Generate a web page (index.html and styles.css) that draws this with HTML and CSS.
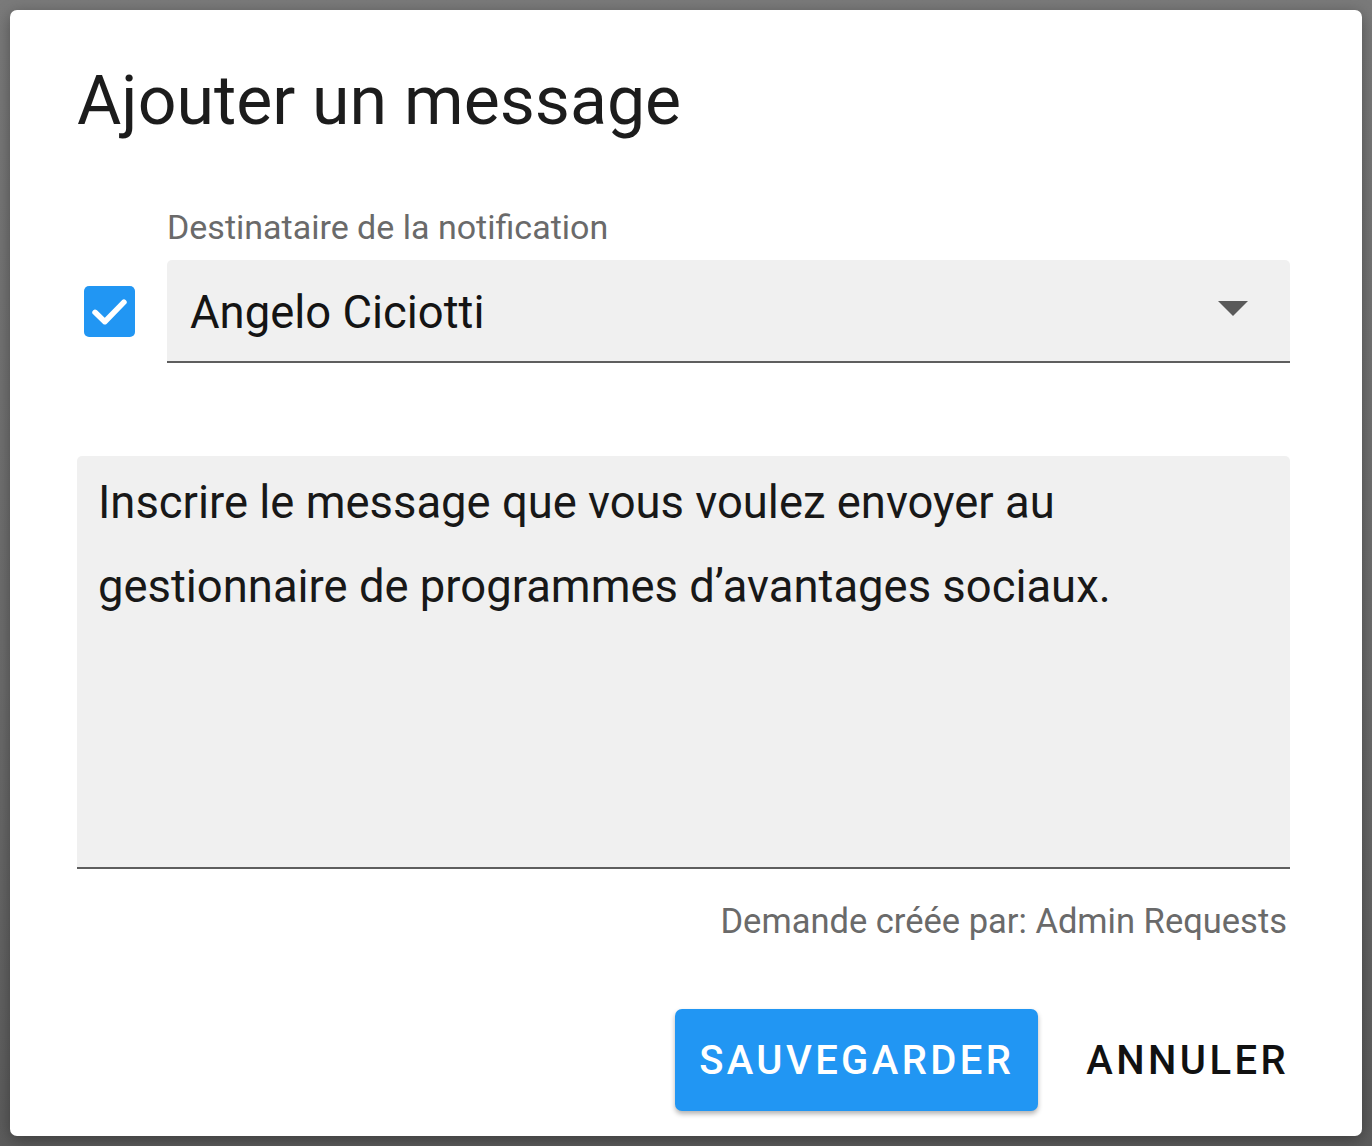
FILE: index.html
```html
<!DOCTYPE html>
<html lang="fr">
<head>
<meta charset="utf-8">
<title>Ajouter un message</title>
<link rel="stylesheet" href="styles.css">
</head>
<body>
<div class="backdrop">
  <div class="dialog">
    <h1 class="title">Ajouter un message</h1>
    <div class="field-row">
      <span class="checkbox" role="checkbox" aria-checked="true">
        <svg viewBox="0 0 24 24" width="51" height="51"><rect x="0" y="0" width="24" height="24" rx="2.4" fill="#2196f3"/><path d="M5.2 12.4 L9.8 16.8 L18.8 7.6" fill="none" stroke="#ffffff" stroke-width="2.6" stroke-linecap="round" stroke-linejoin="round"/></svg>
      </span>
      <div class="field">
        <div class="label">Destinataire de la notification</div>
        <div class="select">
          <span class="select-value">Angelo Ciciotti</span>
          <svg class="arrow" viewBox="0 0 30 15" width="30" height="15"><path d="M0 0 L30 0 L15 15 Z" fill="#5a5a5a"/></svg>
        </div>
      </div>
    </div>
    <div class="message">Inscrire le message que vous voulez envoyer au<br>gestionnaire de programmes d’avantages sociaux.</div>
    <div class="created">Demande créée par: Admin Requests</div>
    <div class="actions">
      <button class="btn btn-primary">SAUVEGARDER</button>
      <button class="btn btn-text">ANNULER</button>
    </div>
  </div>
</div>
</body>
</html>
```

FILE: styles.css
```css
html, body {
  margin: 0;
  padding: 0;
}
body {
  width: 1372px;
  height: 1146px;
  overflow: hidden;
  font-family: Roboto, "Liberation Sans", sans-serif;
}
.backdrop {
  box-sizing: border-box;
  width: 1372px;
  height: 1146px;
  padding: 10px 10px 10px 10px;
  background: linear-gradient(180deg, #7a7a7a 0%, #6c6c6c 60%, #5c5c5c 100%);
}
.dialog {
  box-sizing: border-box;
  height: 1126px;
  background: #ffffff;
  border-radius: 7px;
  box-shadow: 0 4px 16px rgba(0,0,0,0.35);
  padding: 51px 72px 25px 67px;
  display: flex;
  flex-direction: column;
}
.title {
  margin: 0;
  font-size: 68px;
  line-height: 80px;
  font-weight: 400;
  color: #1c1c1c;
}
.field-row {
  margin-top: 66px;
  display: flex;
  align-items: flex-end;
  gap: 32px;
}
.checkbox {
  display: block;
  width: 51px;
  height: 51px;
  margin-left: 7px;
  margin-bottom: 26px;
}
.checkbox svg { display: block; }
.field {
  flex: 1;
}
.label {
  font-size: 34px;
  line-height: 40px;
  color: #6a6a6a;
  margin-bottom: 13px;
}
.select {
  box-sizing: border-box;
  height: 103px;
  background: #f0f0f0;
  border-radius: 5px 5px 0 0;
  border-bottom: 2px solid #5e5e5e;
  display: flex;
  align-items: center;
  padding: 4px 42px 0 23px;
}
.select-value {
  flex: 1;
  font-size: 45.4px;
  line-height: 56px;
  color: #141414;
}
.arrow {
  display: block;
  margin-top: -8px;
}
.message {
  box-sizing: border-box;
  margin-top: 93px;
  height: 413px;
  background: #f0f0f0;
  border-radius: 5px 5px 0 0;
  border-bottom: 2px solid #5e5e5e;
  padding: 5px 21px 0 21px;
  font-size: 45.4px;
  line-height: 84px;
  color: #181818;
}
.created {
  margin-top: 32px;
  text-align: right;
  padding-right: 3px;
  font-size: 34.5px;
  line-height: 40px;
  color: #6a6a6a;
}
.actions {
  margin-top: 68px;
  display: flex;
  justify-content: flex-end;
  align-items: center;
  gap: 24px;
}
.btn {
  font-family: Roboto, "Liberation Sans", sans-serif;
  font-size: 40px;
  font-weight: 500;
  letter-spacing: 3.4px;
  height: 102px;
  border: none;
  border-radius: 7px;
  cursor: pointer;
}
.btn-primary {
  background: #2196f3;
  color: #ffffff;
  padding: 0 24px;
  box-shadow: 0 3px 5px rgba(0,0,0,0.3);
}
.btn-text {
  background: transparent;
  color: #111111;
  padding: 0 1px 0 24px;
}
```
